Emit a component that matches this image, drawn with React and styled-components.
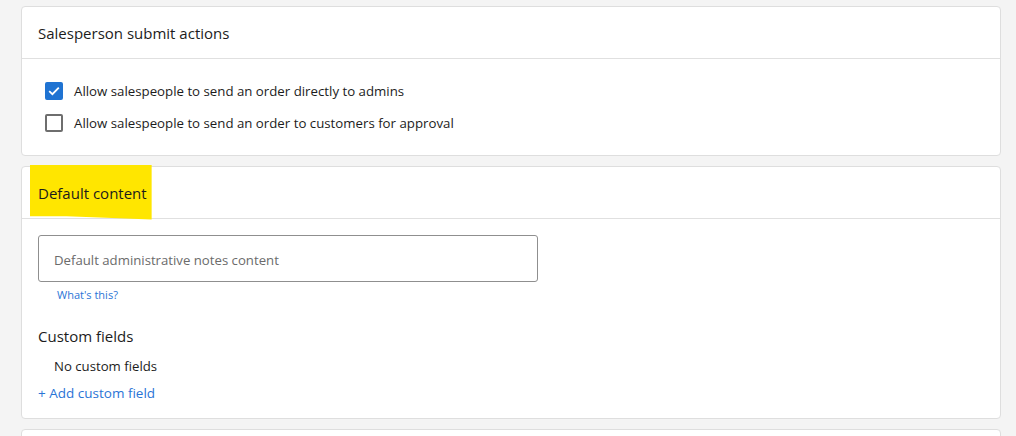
import React from 'react';
import styled, { createGlobalStyle } from 'styled-components';

const GlobalStyle = createGlobalStyle`
  html, body {
    margin: 0;
    padding: 0;
    background: #f4f4f4;
    font-family: 'Open Sans', 'Noto Sans', sans-serif;
    color: #202020;
  }
`;

const Page = styled.div`
  padding: 6px 15px 0 21px;
  display: flex;
  flex-direction: column;
  gap: 10px;
  height: 436px;
  overflow: hidden;
  box-sizing: border-box;
`;

const Card = styled.section`
  background: #fff;
  border: 1px solid #dedede;
  border-radius: 4px;
  flex-shrink: 0;
  min-height: ${(p) => p.minHeight || 'auto'};
`;

const CardHeader = styled.header`
  height: 51px;
  border-bottom: 1px solid #e0e0e0;
  display: flex;
  align-items: center;
  padding: 0 16px;
`;

const Title = styled.h2`
  position: relative;
  margin: 0;
  font-size: 15px;
  font-weight: 400;
  color: #1c1c1c;
  z-index: 0;
`;

const Highlight = styled.span`
  position: absolute;
  left: -8px;
  right: -5px;
  top: -18px;
  bottom: -17px;
  background: #ffe600;
  z-index: -1;
  clip-path: polygon(0 0, 100% 0, 100% 100%, 30% 94%, 0 94%);
`;

const CardBody = styled.div`
  padding: 16px;
  display: flex;
  flex-direction: column;
`;

const CheckRow = styled.label`
  display: flex;
  align-items: center;
  gap: 11px;
  height: 32px;
  padding-left: 7px;
  font-size: 13.25px;
  color: #1c1c1c;
`;

const Box = styled.span`
  width: 18px;
  height: 18px;
  box-sizing: border-box;
  border-radius: 2px;
  border: 2px solid ${(p) => (p.checked ? '#1f73d2' : '#6e6e6e')};
  background: ${(p) => (p.checked ? '#1f73d2' : '#fff')};
  display: flex;
  align-items: center;
  justify-content: center;
`;

const Input = styled.div`
  width: 500px;
  height: 47px;
  box-sizing: border-box;
  border: 1px solid #8f8f8f;
  border-radius: 3px;
  display: flex;
  align-items: center;
  padding: 3px 15px 0;
  font-size: 13.2px;
  color: #6b6b6b;
`;

const Link = styled.a`
  color: #2a74d6;
  font-size: ${(p) => p.size || '13.5px'};
  text-decoration: none;
  padding-left: ${(p) => p.indent || '0'};
  margin-top: ${(p) => p.top || '0'};
  cursor: pointer;
`;

const SubTitle = styled.h3`
  margin: 24px 0 0;
  font-size: 15px;
  font-weight: 400;
  color: #1c1c1c;
`;

const Note = styled.div`
  font-size: 13.2px;
  padding-left: 16px;
  margin-top: 11px;
  color: #1c1c1c;
`;

function Check({ checked, children }) {
  return (
    <CheckRow>
      <Box checked={checked}>
        {checked && (
          <svg width="12" height="10" viewBox="0 0 12 10">
            <path d="M1.2 5.2 4.4 8.2 10.8 1.6" fill="none" stroke="#fff" strokeWidth="1.8" />
          </svg>
        )}
      </Box>
      {children}
    </CheckRow>
  );
}

export default function App() {
  return (
    <>
      <GlobalStyle />
      <Page>
        <Card>
          <CardHeader>
            <Title>Salesperson submit actions</Title>
          </CardHeader>
          <CardBody>
            <Check checked>Allow salespeople to send an order directly to admins</Check>
            <Check>Allow salespeople to send an order to customers for approval</Check>
          </CardBody>
        </Card>
        <Card>
          <CardHeader>
            <Title>
              <Highlight />
              Default content
            </Title>
          </CardHeader>
          <CardBody>
            <Input>Default administrative notes content</Input>
            <Link size="11px" indent="19px" top="5px">What's this?</Link>
            <SubTitle>Custom fields</SubTitle>
            <Note>No custom fields</Note>
            <Link top="9px">+ Add custom field</Link>
          </CardBody>
        </Card>
        <Card minHeight="40px" />
      </Page>
    </>
  );
}
